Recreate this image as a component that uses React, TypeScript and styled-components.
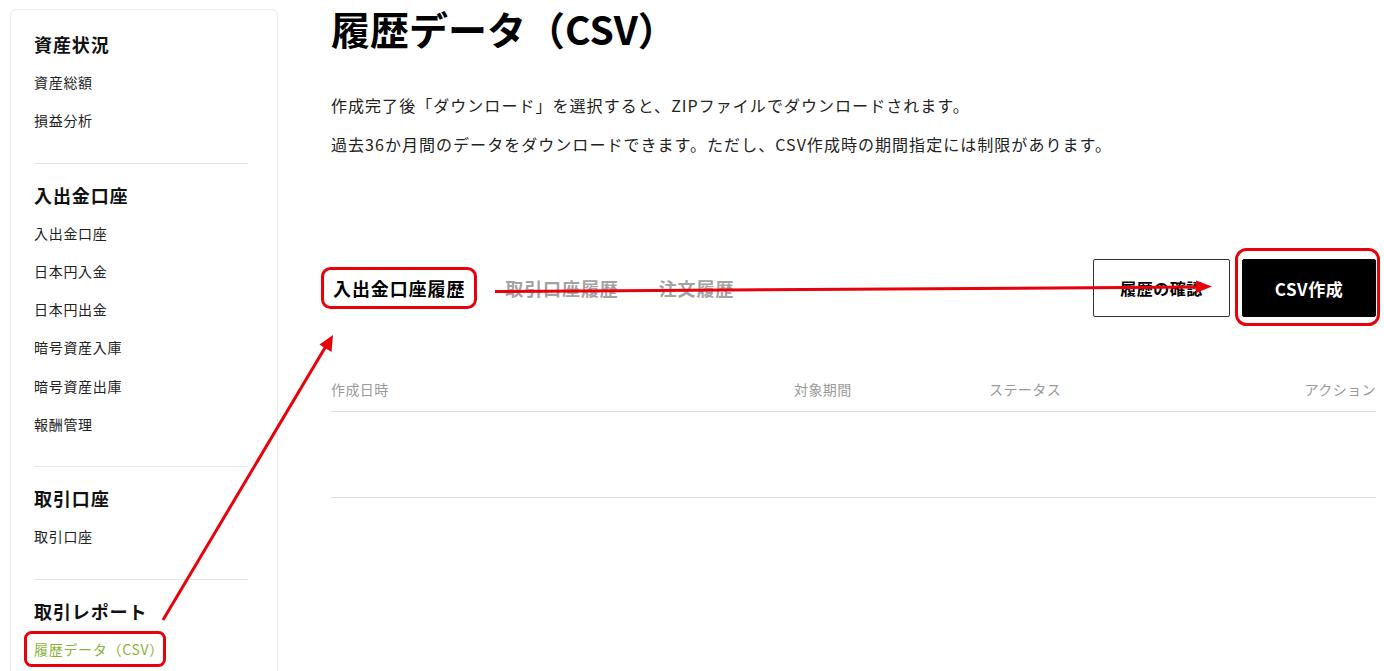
import React from "react";
import styled, { createGlobalStyle } from "styled-components";

const Global = createGlobalStyle`
  html, body { margin: 0; padding: 0; background: #fff; }
  body {
    font-family: "Noto Sans CJK JP", "Noto Sans", sans-serif;
    color: #1a1a1a;
    overflow: hidden;
    width: 1384px;
    height: 671px;
  }
  * { box-sizing: border-box; }
`;

const Page = styled.div`
  position: relative;
  display: flex;
  align-items: flex-start;
  gap: 53px;
  padding: 0 8px 0 10px;
  width: 1384px;
  height: 671px;
  overflow: hidden;
`;

const Sidebar = styled.nav`
  flex: 0 0 268px;
  margin-top: 9px;
  min-height: 720px;
  border: 1px solid #ebebeb;
  border-radius: 6px;
  padding: 0 29px 0 23px;
`;

const Section = styled.div`
  padding: 21px 0 23px;
  & + & {
    padding-top: 18px;
    border-top: 1px solid #e6e6e6;
  }
`;

const SectionTitle = styled.div`
  font-size: 18px;
  font-weight: 700;
  line-height: 26px;
  letter-spacing: 0.05em;
  color: #111;
  margin-bottom: 6px;
`;

const NavItem = styled.div<{ $active?: boolean }>`
  font-size: 14px;
  line-height: 38.3px;
  letter-spacing: 0.05em;
  color: ${(p) => (p.$active ? "#8ab33a" : "#222")};
`;

const Main = styled.main`
  flex: 1;
  min-width: 0;
`;

const Title = styled.h1`
  margin: 0;
  font-size: 39px;
  font-weight: 700;
  line-height: 56px;
  color: #000;
`;

const Intro = styled.div`
  margin-top: 30px;
`;

const Para = styled.p`
  margin: 0;
  font-size: 16px;
  line-height: 39px;
  letter-spacing: 0.065em;
  color: #222;
`;

const Toolbar = styled.div`
  margin-top: 95px;
  display: flex;
  align-items: center;
  justify-content: space-between;
`;

const Tabs = styled.div`
  display: flex;
  gap: 40px;
  padding-left: 2px;
`;

const Tab = styled.div<{ $active?: boolean }>`
  font-size: 18px;
  font-weight: 700;
  letter-spacing: 0.05em;
  line-height: 26px;
  color: ${(p) => (p.$active ? "#000" : "#a3a3a3")};
`;

const Actions = styled.div`
  display: flex;
  gap: 12px;
`;

const Button = styled.button<{ $primary?: boolean; $w: number }>`
  width: ${(p) => p.$w}px;
  height: 58px;
  border: 1px solid ${(p) => (p.$primary ? "#000" : "#333")};
  border-radius: 2px;
  background: ${(p) => (p.$primary ? "#000" : "#fff")};
  color: ${(p) => (p.$primary ? "#fff" : "#000")};
  font-family: inherit;
  font-size: ${(p) => (p.$primary ? 17 : 16)}px;
  font-weight: 700;
  letter-spacing: 0.03em;
  padding: 0;
`;

const Table = styled.div`
  margin-top: 50px;
`;

const HeadRow = styled.div`
  display: grid;
  grid-template-columns: 463px 195px 1fr auto;
  height: 45px;
  align-items: center;
  border-bottom: 1px solid #dedede;
`;

const HeadCell = styled.div`
  font-size: 14px;
  letter-spacing: 0.03em;
  color: #9a9a9a;
  line-height: 42px;
`;

const EmptyRow = styled.div`
  height: 86px;
  border-bottom: 1px solid #dedede;
`;

const Overlay = styled.svg`
  position: absolute;
  left: 0;
  top: 0;
  pointer-events: none;
`;

const RED = "#e8000b";

export default function App() {
  return (
    <>
      <Global />
      <Page>
        <Sidebar>
          <Section>
            <SectionTitle>資産状況</SectionTitle>
            <NavItem>資産総額</NavItem>
            <NavItem>損益分析</NavItem>
          </Section>
          <Section>
            <SectionTitle>入出金口座</SectionTitle>
            <NavItem>入出金口座</NavItem>
            <NavItem>日本円入金</NavItem>
            <NavItem>日本円出金</NavItem>
            <NavItem>暗号資産入庫</NavItem>
            <NavItem>暗号資産出庫</NavItem>
            <NavItem>報酬管理</NavItem>
          </Section>
          <Section>
            <SectionTitle>取引口座</SectionTitle>
            <NavItem>取引口座</NavItem>
          </Section>
          <Section>
            <SectionTitle>取引レポート</SectionTitle>
            <NavItem $active>履歴データ（CSV）</NavItem>
          </Section>
        </Sidebar>
        <Main>
          <Title>履歴データ（CSV）</Title>
          <Intro>
            <Para>作成完了後「ダウンロード」を選択すると、ZIPファイルでダウンロードされます。</Para>
            <Para>過去36か月間のデータをダウンロードできます。ただし、CSV作成時の期間指定には制限があります。</Para>
          </Intro>
          <Toolbar>
            <Tabs>
              <Tab $active>入出金口座履歴</Tab>
              <Tab>取引口座履歴</Tab>
              <Tab>注文履歴</Tab>
            </Tabs>
            <Actions>
              <Button $w={137}>履歴の確認</Button>
              <Button $w={134} $primary>CSV作成</Button>
            </Actions>
          </Toolbar>
          <Table>
            <HeadRow>
              <HeadCell>作成日時</HeadCell>
              <HeadCell>対象期間</HeadCell>
              <HeadCell>ステータス</HeadCell>
              <HeadCell>アクション</HeadCell>
            </HeadRow>
            <EmptyRow />
          </Table>
        </Main>
        <Overlay width="1384" height="671" viewBox="0 0 1384 671">
          <g fill="none" stroke={RED} strokeWidth="3">
            <rect x="25.5" y="632.5" width="139" height="33" rx="6" />
            <rect x="322.5" y="268.5" width="153" height="39" rx="8" />
            <rect x="1236.5" y="249.5" width="142" height="75" rx="10" />
            <line x1="163" y1="620" x2="326" y2="346" />
            <line x1="495" y1="291.5" x2="1198" y2="287" />
          </g>
          <g fill={RED}>
            <polygon points="333,335 331.5,352 319.5,344.5" />
            <polygon points="1212,286.5 1196,280.5 1196,293" />
          </g>
        </Overlay>
      </Page>
    </>
  );
}
